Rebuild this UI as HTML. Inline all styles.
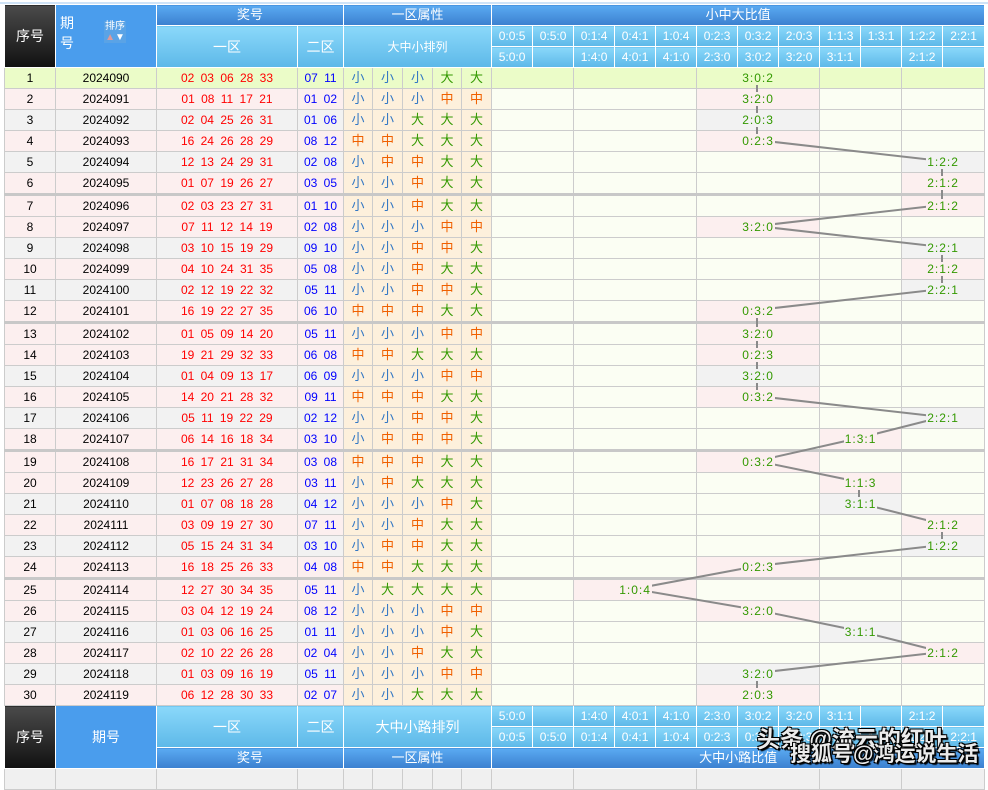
<!DOCTYPE html>
<html><head><meta charset="utf-8">
<style>
body{margin:0;background:#fff;width:988px;height:773px;overflow:hidden;position:relative;font-family:"Liberation Sans","Noto Sans CJK SC",sans-serif}
.topline{position:absolute;left:0;top:2px;width:988px;height:2px;background:#cfe3f7}
table{position:absolute;left:4px;top:4px;width:980px;border-collapse:collapse;table-layout:fixed}
td,th{padding:0;height:20px;border:1px solid #ccc;text-align:center;font-size:12px;font-weight:normal;white-space:nowrap;overflow:hidden;line-height:20px}
th{color:#fff;border-color:#fff;font-size:13px}
.k{background:linear-gradient(#4a4a4a,#111);color:#fff;font-size:14px}
.qb{background:#4a9ded;color:#fff;font-size:14px;position:relative}
.d{background:linear-gradient(#5aaaf2,#3b80cf)}
.l{background:linear-gradient(#8ad8fa,#5db8e8);font-size:12px}
.l2{font-size:14px}
tr.g td{background:#ebfcc8}
tr.p td{background:#fcefef}
tr.y td{background:#f2f2f2}
tr td.a{background:#fdf0dc;font-size:13px}
tr.g td.a{background:#ebfcc8}
td.r{color:#f00;word-spacing:3px}
td.b{color:#00f;word-spacing:3px}
td.s{color:#3277c4}td.m{color:#f06000}td.t{color:#339900}
tr td.e{background:#fbfef3}
tr.g td.e{background:#ebfcc8}
td.h{color:#339900;letter-spacing:1px}
td.h span{position:relative;z-index:3;background:inherit;padding:0 1px}
tr.sep td{border-top:3px solid #c8c8c8}
svg.ln{position:absolute;left:0;top:0;z-index:2;pointer-events:none}
.wm{position:absolute;z-index:5;color:rgba(255,255,255,.92);font-weight:bold;text-shadow:1px 1px 0 #000,-1px -1px 0 #000,1px -1px 0 #000,-1px 1px 0 #000,2px 2px 1px #000;white-space:nowrap}
</style></head><body>
<div class="topline"></div>
<table>
<colgroup><col style="width:51px"><col style="width:101px"><col style="width:141px"><col style="width:46px"><col style="width:29px"><col style="width:30px"><col style="width:30px"><col style="width:29px"><col style="width:30px"><col style="width:41px"><col style="width:41px"><col style="width:41px"><col style="width:41px"><col style="width:41px"><col style="width:41px"><col style="width:41px"><col style="width:41px"><col style="width:41px"><col style="width:41px"><col style="width:41px"><col style="width:42px"></colgroup>
<tr><th rowspan="3" class="k">序号</th><th rowspan="3" class="qb"><div style="position:absolute;left:4px;top:8px;line-height:20px;text-align:left">期<br>号</div><div style="position:absolute;left:48px;top:16px;font-size:10px;line-height:11px;background:#5aa3e6;padding:0 1px">排序<br><span style="color:#d99">▲</span>▼</div></th><th colspan="2" class="d">奖号</th><th colspan="5" class="d">一区属性</th><th colspan="12" class="d">小中大比值</th></tr>
<tr><th rowspan="2" class="l l2">一区</th><th rowspan="2" class="l l2">二区</th><th colspan="5" rowspan="2" class="l">大中小排列</th><th class="l">0:0:5</th><th class="l">0:5:0</th><th class="l">0:1:4</th><th class="l">0:4:1</th><th class="l">1:0:4</th><th class="l">0:2:3</th><th class="l">0:3:2</th><th class="l">2:0:3</th><th class="l">1:1:3</th><th class="l">1:3:1</th><th class="l">1:2:2</th><th class="l">2:2:1</th></tr>
<tr><th class="l">5:0:0</th><th class="l"></th><th class="l">1:4:0</th><th class="l">4:0:1</th><th class="l">4:1:0</th><th class="l">2:3:0</th><th class="l">3:0:2</th><th class="l">3:2:0</th><th class="l">3:1:1</th><th class="l"></th><th class="l">2:1:2</th><th class="l"></th></tr>

<tr class="g"><td>1</td><td>2024090</td><td class="r">02 03 06 28 33</td><td class="b">07 11</td><td class="a s">小</td><td class="a s">小</td><td class="a s">小</td><td class="a t">大</td><td class="a t">大</td><td colspan="2" class="e"></td><td colspan="3" class="e"></td><td colspan="3" class="h"><span>3:0:2</span></td><td colspan="2" class="e"></td><td colspan="2" class="e"></td></tr>
<tr class="p"><td>2</td><td>2024091</td><td class="r">01 08 11 17 21</td><td class="b">01 02</td><td class="a s">小</td><td class="a s">小</td><td class="a s">小</td><td class="a m">中</td><td class="a m">中</td><td colspan="2" class="e"></td><td colspan="3" class="e"></td><td colspan="3" class="h"><span>3:2:0</span></td><td colspan="2" class="e"></td><td colspan="2" class="e"></td></tr>
<tr class="y"><td>3</td><td>2024092</td><td class="r">02 04 25 26 31</td><td class="b">01 06</td><td class="a s">小</td><td class="a s">小</td><td class="a t">大</td><td class="a t">大</td><td class="a t">大</td><td colspan="2" class="e"></td><td colspan="3" class="e"></td><td colspan="3" class="h"><span>2:0:3</span></td><td colspan="2" class="e"></td><td colspan="2" class="e"></td></tr>
<tr class="p"><td>4</td><td>2024093</td><td class="r">16 24 26 28 29</td><td class="b">08 12</td><td class="a m">中</td><td class="a m">中</td><td class="a t">大</td><td class="a t">大</td><td class="a t">大</td><td colspan="2" class="e"></td><td colspan="3" class="e"></td><td colspan="3" class="h"><span>0:2:3</span></td><td colspan="2" class="e"></td><td colspan="2" class="e"></td></tr>
<tr class="y"><td>5</td><td>2024094</td><td class="r">12 13 24 29 31</td><td class="b">02 08</td><td class="a s">小</td><td class="a m">中</td><td class="a m">中</td><td class="a t">大</td><td class="a t">大</td><td colspan="2" class="e"></td><td colspan="3" class="e"></td><td colspan="3" class="e"></td><td colspan="2" class="e"></td><td colspan="2" class="h"><span>1:2:2</span></td></tr>
<tr class="p"><td>6</td><td>2024095</td><td class="r">01 07 19 26 27</td><td class="b">03 05</td><td class="a s">小</td><td class="a s">小</td><td class="a m">中</td><td class="a t">大</td><td class="a t">大</td><td colspan="2" class="e"></td><td colspan="3" class="e"></td><td colspan="3" class="e"></td><td colspan="2" class="e"></td><td colspan="2" class="h"><span>2:1:2</span></td></tr>
<tr class="p sep"><td>7</td><td>2024096</td><td class="r">02 03 23 27 31</td><td class="b">01 10</td><td class="a s">小</td><td class="a s">小</td><td class="a m">中</td><td class="a t">大</td><td class="a t">大</td><td colspan="2" class="e"></td><td colspan="3" class="e"></td><td colspan="3" class="e"></td><td colspan="2" class="e"></td><td colspan="2" class="h"><span>2:1:2</span></td></tr>
<tr class="p"><td>8</td><td>2024097</td><td class="r">07 11 12 14 19</td><td class="b">02 08</td><td class="a s">小</td><td class="a s">小</td><td class="a s">小</td><td class="a m">中</td><td class="a m">中</td><td colspan="2" class="e"></td><td colspan="3" class="e"></td><td colspan="3" class="h"><span>3:2:0</span></td><td colspan="2" class="e"></td><td colspan="2" class="e"></td></tr>
<tr class="y"><td>9</td><td>2024098</td><td class="r">03 10 15 19 29</td><td class="b">09 10</td><td class="a s">小</td><td class="a s">小</td><td class="a m">中</td><td class="a m">中</td><td class="a t">大</td><td colspan="2" class="e"></td><td colspan="3" class="e"></td><td colspan="3" class="e"></td><td colspan="2" class="e"></td><td colspan="2" class="h"><span>2:2:1</span></td></tr>
<tr class="p"><td>10</td><td>2024099</td><td class="r">04 10 24 31 35</td><td class="b">05 08</td><td class="a s">小</td><td class="a s">小</td><td class="a m">中</td><td class="a t">大</td><td class="a t">大</td><td colspan="2" class="e"></td><td colspan="3" class="e"></td><td colspan="3" class="e"></td><td colspan="2" class="e"></td><td colspan="2" class="h"><span>2:1:2</span></td></tr>
<tr class="y"><td>11</td><td>2024100</td><td class="r">02 12 19 22 32</td><td class="b">05 11</td><td class="a s">小</td><td class="a s">小</td><td class="a m">中</td><td class="a m">中</td><td class="a t">大</td><td colspan="2" class="e"></td><td colspan="3" class="e"></td><td colspan="3" class="e"></td><td colspan="2" class="e"></td><td colspan="2" class="h"><span>2:2:1</span></td></tr>
<tr class="p"><td>12</td><td>2024101</td><td class="r">16 19 22 27 35</td><td class="b">06 10</td><td class="a m">中</td><td class="a m">中</td><td class="a m">中</td><td class="a t">大</td><td class="a t">大</td><td colspan="2" class="e"></td><td colspan="3" class="e"></td><td colspan="3" class="h"><span>0:3:2</span></td><td colspan="2" class="e"></td><td colspan="2" class="e"></td></tr>
<tr class="p sep"><td>13</td><td>2024102</td><td class="r">01 05 09 14 20</td><td class="b">05 11</td><td class="a s">小</td><td class="a s">小</td><td class="a s">小</td><td class="a m">中</td><td class="a m">中</td><td colspan="2" class="e"></td><td colspan="3" class="e"></td><td colspan="3" class="h"><span>3:2:0</span></td><td colspan="2" class="e"></td><td colspan="2" class="e"></td></tr>
<tr class="p"><td>14</td><td>2024103</td><td class="r">19 21 29 32 33</td><td class="b">06 08</td><td class="a m">中</td><td class="a m">中</td><td class="a t">大</td><td class="a t">大</td><td class="a t">大</td><td colspan="2" class="e"></td><td colspan="3" class="e"></td><td colspan="3" class="h"><span>0:2:3</span></td><td colspan="2" class="e"></td><td colspan="2" class="e"></td></tr>
<tr class="y"><td>15</td><td>2024104</td><td class="r">01 04 09 13 17</td><td class="b">06 09</td><td class="a s">小</td><td class="a s">小</td><td class="a s">小</td><td class="a m">中</td><td class="a m">中</td><td colspan="2" class="e"></td><td colspan="3" class="e"></td><td colspan="3" class="h"><span>3:2:0</span></td><td colspan="2" class="e"></td><td colspan="2" class="e"></td></tr>
<tr class="p"><td>16</td><td>2024105</td><td class="r">14 20 21 28 32</td><td class="b">09 11</td><td class="a m">中</td><td class="a m">中</td><td class="a m">中</td><td class="a t">大</td><td class="a t">大</td><td colspan="2" class="e"></td><td colspan="3" class="e"></td><td colspan="3" class="h"><span>0:3:2</span></td><td colspan="2" class="e"></td><td colspan="2" class="e"></td></tr>
<tr class="y"><td>17</td><td>2024106</td><td class="r">05 11 19 22 29</td><td class="b">02 12</td><td class="a s">小</td><td class="a s">小</td><td class="a m">中</td><td class="a m">中</td><td class="a t">大</td><td colspan="2" class="e"></td><td colspan="3" class="e"></td><td colspan="3" class="e"></td><td colspan="2" class="e"></td><td colspan="2" class="h"><span>2:2:1</span></td></tr>
<tr class="p"><td>18</td><td>2024107</td><td class="r">06 14 16 18 34</td><td class="b">03 10</td><td class="a s">小</td><td class="a m">中</td><td class="a m">中</td><td class="a m">中</td><td class="a t">大</td><td colspan="2" class="e"></td><td colspan="3" class="e"></td><td colspan="3" class="e"></td><td colspan="2" class="h"><span>1:3:1</span></td><td colspan="2" class="e"></td></tr>
<tr class="p sep"><td>19</td><td>2024108</td><td class="r">16 17 21 31 34</td><td class="b">03 08</td><td class="a m">中</td><td class="a m">中</td><td class="a m">中</td><td class="a t">大</td><td class="a t">大</td><td colspan="2" class="e"></td><td colspan="3" class="e"></td><td colspan="3" class="h"><span>0:3:2</span></td><td colspan="2" class="e"></td><td colspan="2" class="e"></td></tr>
<tr class="p"><td>20</td><td>2024109</td><td class="r">12 23 26 27 28</td><td class="b">03 11</td><td class="a s">小</td><td class="a m">中</td><td class="a t">大</td><td class="a t">大</td><td class="a t">大</td><td colspan="2" class="e"></td><td colspan="3" class="e"></td><td colspan="3" class="e"></td><td colspan="2" class="h"><span>1:1:3</span></td><td colspan="2" class="e"></td></tr>
<tr class="y"><td>21</td><td>2024110</td><td class="r">01 07 08 18 28</td><td class="b">04 12</td><td class="a s">小</td><td class="a s">小</td><td class="a s">小</td><td class="a m">中</td><td class="a t">大</td><td colspan="2" class="e"></td><td colspan="3" class="e"></td><td colspan="3" class="e"></td><td colspan="2" class="h"><span>3:1:1</span></td><td colspan="2" class="e"></td></tr>
<tr class="p"><td>22</td><td>2024111</td><td class="r">03 09 19 27 30</td><td class="b">07 11</td><td class="a s">小</td><td class="a s">小</td><td class="a m">中</td><td class="a t">大</td><td class="a t">大</td><td colspan="2" class="e"></td><td colspan="3" class="e"></td><td colspan="3" class="e"></td><td colspan="2" class="e"></td><td colspan="2" class="h"><span>2:1:2</span></td></tr>
<tr class="y"><td>23</td><td>2024112</td><td class="r">05 15 24 31 34</td><td class="b">03 10</td><td class="a s">小</td><td class="a m">中</td><td class="a m">中</td><td class="a t">大</td><td class="a t">大</td><td colspan="2" class="e"></td><td colspan="3" class="e"></td><td colspan="3" class="e"></td><td colspan="2" class="e"></td><td colspan="2" class="h"><span>1:2:2</span></td></tr>
<tr class="p"><td>24</td><td>2024113</td><td class="r">16 18 25 26 33</td><td class="b">04 08</td><td class="a m">中</td><td class="a m">中</td><td class="a t">大</td><td class="a t">大</td><td class="a t">大</td><td colspan="2" class="e"></td><td colspan="3" class="e"></td><td colspan="3" class="h"><span>0:2:3</span></td><td colspan="2" class="e"></td><td colspan="2" class="e"></td></tr>
<tr class="p sep"><td>25</td><td>2024114</td><td class="r">12 27 30 34 35</td><td class="b">05 11</td><td class="a s">小</td><td class="a t">大</td><td class="a t">大</td><td class="a t">大</td><td class="a t">大</td><td colspan="2" class="e"></td><td colspan="3" class="h"><span>1:0:4</span></td><td colspan="3" class="e"></td><td colspan="2" class="e"></td><td colspan="2" class="e"></td></tr>
<tr class="p"><td>26</td><td>2024115</td><td class="r">03 04 12 19 24</td><td class="b">08 12</td><td class="a s">小</td><td class="a s">小</td><td class="a s">小</td><td class="a m">中</td><td class="a m">中</td><td colspan="2" class="e"></td><td colspan="3" class="e"></td><td colspan="3" class="h"><span>3:2:0</span></td><td colspan="2" class="e"></td><td colspan="2" class="e"></td></tr>
<tr class="y"><td>27</td><td>2024116</td><td class="r">01 03 06 16 25</td><td class="b">01 11</td><td class="a s">小</td><td class="a s">小</td><td class="a s">小</td><td class="a m">中</td><td class="a t">大</td><td colspan="2" class="e"></td><td colspan="3" class="e"></td><td colspan="3" class="e"></td><td colspan="2" class="h"><span>3:1:1</span></td><td colspan="2" class="e"></td></tr>
<tr class="p"><td>28</td><td>2024117</td><td class="r">02 10 22 26 28</td><td class="b">02 04</td><td class="a s">小</td><td class="a s">小</td><td class="a m">中</td><td class="a t">大</td><td class="a t">大</td><td colspan="2" class="e"></td><td colspan="3" class="e"></td><td colspan="3" class="e"></td><td colspan="2" class="e"></td><td colspan="2" class="h"><span>2:1:2</span></td></tr>
<tr class="y"><td>29</td><td>2024118</td><td class="r">01 03 09 16 19</td><td class="b">05 11</td><td class="a s">小</td><td class="a s">小</td><td class="a s">小</td><td class="a m">中</td><td class="a m">中</td><td colspan="2" class="e"></td><td colspan="3" class="e"></td><td colspan="3" class="h"><span>3:2:0</span></td><td colspan="2" class="e"></td><td colspan="2" class="e"></td></tr>
<tr class="p"><td>30</td><td>2024119</td><td class="r">06 12 28 30 33</td><td class="b">02 07</td><td class="a s">小</td><td class="a s">小</td><td class="a t">大</td><td class="a t">大</td><td class="a t">大</td><td colspan="2" class="e"></td><td colspan="3" class="e"></td><td colspan="3" class="h"><span>2:0:3</span></td><td colspan="2" class="e"></td><td colspan="2" class="e"></td></tr>

<tr><th rowspan="3" class="k">序号</th><th rowspan="3" class="qb">期号</th><th rowspan="2" class="l l2">一区</th><th rowspan="2" class="l l2">二区</th><th colspan="5" rowspan="2" class="l l2">大中小路排列</th><th class="l">5:0:0</th><th class="l"></th><th class="l">1:4:0</th><th class="l">4:0:1</th><th class="l">4:1:0</th><th class="l">2:3:0</th><th class="l">3:0:2</th><th class="l">3:2:0</th><th class="l">3:1:1</th><th class="l"></th><th class="l">2:1:2</th><th class="l"></th></tr>
<tr><th class="l">0:0:5</th><th class="l">0:5:0</th><th class="l">0:1:4</th><th class="l">0:4:1</th><th class="l">1:0:4</th><th class="l">0:2:3</th><th class="l">0:3:2</th><th class="l">2:0:3</th><th class="l">1:1:3</th><th class="l">1:3:1</th><th class="l">1:2:2</th><th class="l">2:2:1</th></tr>
<tr><th colspan="2" class="d">奖号</th><th colspan="5" class="d">一区属性</th><th colspan="12" class="d">大中小路比值</th></tr>
<tr style="background:#f0f0f0"><td></td><td></td><td></td><td></td><td></td><td></td><td></td><td></td><td></td><td colspan="2"></td><td colspan="3"></td><td colspan="3"></td><td colspan="2"></td><td colspan="2"></td></tr>
</table>
<svg class="ln" width="988" height="773"><polyline fill="none" stroke="#8a8a8a" stroke-width="2" points="757,77 757,98 757,119 757,140 942,161 942,182 942,205 757,226 942,247 942,268 942,289 757,310 757,333 757,354 757,375 757,396 942,417 859,438 757,461 859,482 859,503 942,524 942,545 757,566 634,589 757,610 859,631 942,652 757,673 757,694"/></svg>
<div class="wm" style="left:757px;top:720px;font-size:23px">头条 @流云的红叶</div>
<div class="wm" style="left:790px;top:738px;font-size:21px">搜狐号@鸿运说生活</div>
</body></html>
